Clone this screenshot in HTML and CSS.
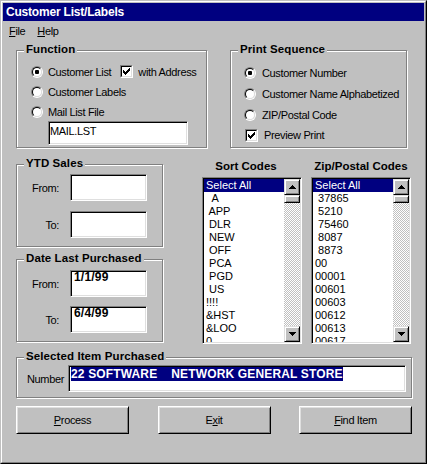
FILE: index.html
```html
<!DOCTYPE html>
<html lang="en">
<head>
<meta charset="utf-8">
<title>Customer List/Labels</title>
<link rel="stylesheet" href="styles.css">
</head>
<body>
<div class="window">
  <div class="frame">
    <div class="titlebar">Customer List/Labels</div>
    <div class="menubar">
      <span class="menu"><u>F</u>ile</span>
      <span class="menu"><u>H</u>elp</span>
    </div>
    <div class="content">
      <div class="row row-top">
        <div class="group g-function">
          <div class="gtitle">Function</div>
          <div class="gbody fn-body">
            <div class="opt h21">
              <span class="radio on"><span class="ring"></span></span>
              <span class="lbl">Customer List</span>
              <span class="check on ml4"><span class="box"><svg width="7" height="7" viewBox="0 0 7 7"><path d="M6 0h1v1h-1zM5 1h2v1h-2zM0 2h1v1h-1zM4 2h3v1h-3zM0 3h2v1h-2zM3 3h3v1h-3zM0 4h5v1h-5zM1 5h3v1h-3zM2 6h1v1h-1z" fill="#000"/></svg></span></span>
              <span class="lbl">with Address</span>
            </div>
            <div class="opt h20">
              <span class="radio"><span class="ring"></span></span>
              <span class="lbl">Customer Labels</span>
            </div>
            <div class="opt h19">
              <span class="radio"><span class="ring"></span></span>
              <span class="lbl">Mail List File</span>
            </div>
            <div class="field mail-field">MAIL.LST</div>
          </div>
        </div>
        <div class="group g-print">
          <div class="gtitle">Print Sequence</div>
          <div class="gbody print-body">
            <div class="opt h21">
              <span class="radio on"><span class="ring"></span></span>
              <span class="lbl">Customer Number</span>
            </div>
            <div class="opt h21">
              <span class="radio"><span class="ring"></span></span>
              <span class="lbl">Customer Name Alphabetized</span>
            </div>
            <div class="opt h21">
              <span class="radio"><span class="ring"></span></span>
              <span class="lbl">ZIP/Postal Code</span>
            </div>
            <div class="opt h20">
              <span class="check on ml1"><span class="box"><svg width="7" height="7" viewBox="0 0 7 7"><path d="M6 0h1v1h-1zM5 1h2v1h-2zM0 2h1v1h-1zM4 2h3v1h-3zM0 3h2v1h-2zM3 3h3v1h-3zM0 4h5v1h-5zM1 5h3v1h-3zM2 6h1v1h-1z" fill="#000"/></svg></span></span>
              <span class="lbl">Preview Print</span>
            </div>
          </div>
        </div>
      </div>

      <div class="row row-mid">
        <div class="leftcol">
          <div class="group g-range">
            <div class="gtitle">YTD Sales</div>
            <div class="gbody range-body">
              <span class="rlbl">From:</span>
              <div class="field range-field"></div>
              <span class="rlbl">To:</span>
              <div class="field range-field"></div>
            </div>
          </div>
          <div class="group g-range g-date">
            <div class="gtitle">Date Last Purchased</div>
            <div class="gbody range-body date-body">
              <span class="rlbl">From:</span>
              <div class="field range-field bold-val">1/1/99</div>
              <span class="rlbl">To:</span>
              <div class="field range-field bold-val">6/4/99</div>
            </div>
          </div>
        </div>

        <div class="lists">
          <div class="listcol">
            <div class="ltitle sort-title">Sort Codes</div>
            <div class="list">
              <div class="items">
                <div class="item sel">Select All</div>
                <div class="item">  A</div>
                <div class="item"> APP</div>
                <div class="item"> DLR</div>
                <div class="item"> NEW</div>
                <div class="item"> OFF</div>
                <div class="item"> PCA</div>
                <div class="item"> PGD</div>
                <div class="item"> US</div>
                <div class="item">!!!!</div>
                <div class="item">&amp;HST</div>
                <div class="item">&amp;LOO</div>
                <div class="item">0</div>
              </div>
              <div class="scrollbar">
                <div class="sb-btn"><svg width="7" height="4" viewBox="0 0 7 4"><path d="M3 0h1v1h1v1h1v1h1v1h-7v-1h1v-1h1v-1h1z" fill="#000"/></svg></div>
                <div class="sb-thumb"></div>
                <div class="sb-track"></div>
                <div class="sb-btn"><svg width="7" height="4" viewBox="0 0 7 4"><path d="M0 0h7v1h-1v1h-1v1h-1v1h-1v-1h-1v-1h-1v-1h-1z" fill="#000"/></svg></div>
              </div>
            </div>
          </div>
          <div class="listcol">
            <div class="ltitle">Zip/Postal Codes</div>
            <div class="list">
              <div class="items">
                <div class="item sel">Select All</div>
                <div class="item"> 37865</div>
                <div class="item"> 5210</div>
                <div class="item"> 75460</div>
                <div class="item"> 8087</div>
                <div class="item"> 8873</div>
                <div class="item">00</div>
                <div class="item">00001</div>
                <div class="item">00601</div>
                <div class="item">00603</div>
                <div class="item">00612</div>
                <div class="item">00613</div>
                <div class="item">00617</div>
              </div>
              <div class="scrollbar">
                <div class="sb-btn"><svg width="7" height="4" viewBox="0 0 7 4"><path d="M3 0h1v1h1v1h1v1h1v1h-7v-1h1v-1h1v-1h1z" fill="#000"/></svg></div>
                <div class="sb-thumb"></div>
                <div class="sb-track"></div>
                <div class="sb-btn"><svg width="7" height="4" viewBox="0 0 7 4"><path d="M0 0h7v1h-1v1h-1v1h-1v1h-1v-1h-1v-1h-1v-1h-1z" fill="#000"/></svg></div>
              </div>
            </div>
          </div>
        </div>
      </div>

      <div class="group g-selected">
        <div class="gtitle">Selected Item Purchased</div>
        <div class="gbody sel-body">
          <span class="sel-lbl">Number</span>
          <div class="field sel-field"><span class="hilite">22 SOFTWARE    NETWORK GENERAL STORE</span></div>
        </div>
      </div>

      <div class="buttons">
        <div class="btn"><span><u>P</u>rocess</span></div>
        <div class="btn"><span>E<u>x</u>it</span></div>
        <div class="btn"><span><u>F</u>ind Item</span></div>
      </div>
    </div>
  </div>
</div>
</body>
</html>
```

FILE: styles.css
```css
html, body {
  margin: 0;
  padding: 0;
  background: #c0c0c0;
}

body {
  font-family: "Liberation Sans", Arial, sans-serif;
  font-size: 11px;
  color: #000;
}

.window {
  width: 427px;
  height: 464px;
  box-sizing: border-box;
  border: 1px solid;
  border-color: #c0c0c0 #000 #000 #c0c0c0;
  background: #c0c0c0;
}

.frame {
  height: 100%;
  box-sizing: border-box;
  border: 1px solid;
  border-color: #fff #808080 #808080 #fff;
  padding: 1px;
  display: flex;
  flex-direction: column;
}

.titlebar {
  height: 18px;
  line-height: 18px;
  background: #000080;
  color: #fff;
  font-weight: bold;
  font-size: 12px;
  letter-spacing: -0.2px;
  padding-left: 3px;
  flex: none;
}

.menubar {
  height: 18px;
  box-sizing: border-box;
  padding-top: 2px;
  line-height: 16px;
  display: flex;
  flex: none;
  letter-spacing: -0.35px;
}

.menu {
  padding: 0 6px;
}

u {
  text-decoration: underline;
  text-underline-offset: 1px;
}

.content {
  padding-left: 13px;
  display: flex;
  flex-direction: column;
  align-items: flex-start;
}

.row {
  display: flex;
  align-items: flex-start;
}

.row-top {
  margin-top: 11px;
}

/* etched group box */
.group {
  box-sizing: border-box;
  border: 1px solid #808080;
  box-shadow: inset 1px 1px 0 #fff, 1px 1px 0 #fff;
}

.gtitle {
  width: fit-content;
  margin: -8px 0 0 7px;
  padding: 0 2px;
  background: #c0c0c0;
  font-weight: bold;
  font-size: 11.5px;
  line-height: 13px;
  letter-spacing: 0.1px;
}

.lbl, .rlbl, .sel-lbl, .btn, .field {
  letter-spacing: -0.35px;
}

.g-function {
  width: 191px;
  height: 98px;
}

.fn-body {
  padding: 5px 0 0 14px;
}

.g-print {
  width: 177px;
  height: 98px;
  margin-left: 23px;
}

.print-body {
  padding: 6px 0 0 13px;
}

.opt {
  display: flex;
  align-items: center;
  gap: 5px;
  white-space: nowrap;
}

.print-body .opt {
  gap: 6px;
}

.h21 { height: 21px; }
.h20 { height: 20px; }
.h19 { height: 19px; }

.ml4 { margin-left: 4px; }
.ml1 { margin-left: 1px; }

/* radio button */
.radio {
  width: 12px;
  height: 12px;
  box-sizing: border-box;
  border: 1px solid;
  border-color: #808080 #fff #fff #808080;
  border-radius: 50%;
  display: flex;
  flex: none;
}

.ring {
  flex: 1;
  border: 1px solid;
  border-color: #000 #dfdfdf #dfdfdf #000;
  border-radius: 50%;
  background: #fff;
  display: flex;
  align-items: center;
  justify-content: center;
}

.radio.on .ring::after {
  content: "";
  width: 4px;
  height: 4px;
  border-radius: 1px;
  background: #000;
}

/* checkbox */
.check {
  width: 13px;
  height: 13px;
  box-sizing: border-box;
  border: 1px solid;
  border-color: #808080 #fff #fff #808080;
  display: flex;
  flex: none;
}

.check .box {
  flex: 1;
  border: 1px solid;
  border-color: #000 #dfdfdf #dfdfdf #000;
  background: #fff;
  padding: 1px;
  display: flex;
}

.check svg {
  display: block;
  shape-rendering: crispEdges;
}

/* sunken text field */
.field {
  box-sizing: border-box;
  border: 1px solid;
  border-color: #808080 #fff #fff #808080;
  box-shadow: inset 1px 1px 0 #000, inset -1px -1px 0 #dfdfdf;
  background: #fff;
  padding: 1px;
  white-space: pre;
  overflow: hidden;
}

.mail-field {
  margin-left: 17px;
  width: 140px;
  height: 24px;
  line-height: 16px;
  padding-left: 1px;
}

/* middle row */
.row-mid {
  margin-top: 12px;
}

.leftcol {
  padding-top: 4px;
  display: flex;
  flex-direction: column;
}

.g-range {
  width: 147px;
  height: 83px;
}

.g-date {
  margin-top: 12px;
}

.range-body {
  display: grid;
  grid-template-columns: 42px 77px;
  column-gap: 11px;
  row-gap: 10px;
  align-items: center;
  padding-top: 4px;
}

.date-body {
  padding-top: 5px;
  row-gap: 9px;
}

.rlbl {
  justify-self: end;
}

.range-field {
  height: 27px;
}

.bold-val {
  font-weight: bold;
  font-size: 12px;
  letter-spacing: 0.2px;
  line-height: 8px;
  padding: 2px 0 0 3px;
}

.lists {
  margin-left: 39px;
  display: flex;
  gap: 9px;
}

.listcol {
  width: 100px;
  display: flex;
  flex-direction: column;
}

.ltitle {
  font-weight: bold;
  font-size: 11.5px;
  line-height: 13px;
  text-align: center;
  margin-bottom: 4px;
  white-space: nowrap;
}

.sort-title {
  padding-right: 12px;
}

.list {
  width: 100px;
  height: 167px;
  box-sizing: border-box;
  border: 1px solid;
  border-color: #808080 #fff #fff #808080;
  box-shadow: inset 1px 1px 0 #000, inset -1px -1px 0 #dfdfdf;
  padding: 1px;
  background: #fff;
  display: flex;
}

.items {
  flex: 1;
  overflow: hidden;
}

.item {
  height: 13px;
  line-height: 13px;
  padding-left: 2px;
  white-space: pre;
}

.item.sel {
  background: #000080;
  color: #fff;
}

.scrollbar {
  width: 16px;
  display: flex;
  flex-direction: column;
  flex: none;
}

.sb-btn, .sb-thumb {
  box-sizing: border-box;
  border: 1px solid;
  border-color: #dfdfdf #000 #000 #dfdfdf;
  box-shadow: inset 1px 1px 0 #fff, inset -1px -1px 0 #808080;
  background: #c0c0c0;
  flex: none;
}

.sb-btn {
  height: 16px;
  display: flex;
  align-items: center;
  justify-content: center;
}

.sb-btn svg {
  display: block;
  shape-rendering: crispEdges;
}

.sb-thumb {
  height: 8px;
}

.sb-track {
  flex: 1;
  background-color: #c0c0c0;
  background-image: conic-gradient(#fff 0 25%, #c0c0c0 0 50%, #fff 0 75%, #c0c0c0 0);
  background-size: 2px 2px;
}

/* selected item */
.g-selected {
  margin-top: 13px;
  width: 396px;
  height: 41px;
}

.sel-body {
  display: flex;
  align-items: center;
  padding: 2px 0 0 10px;
}

.sel-lbl {
  width: 41px;
  flex: none;
}

.sel-field {
  width: 338px;
  height: 27px;
  padding: 1px 0 0 2px;
}

.hilite {
  display: inline-block;
  background: #000080;
  color: #fff;
  font-weight: bold;
  font-size: 12px;
  letter-spacing: 0.15px;
  line-height: 14px;
  vertical-align: top;
}

/* buttons */
.buttons {
  margin-top: 8px;
  width: 396px;
  display: flex;
  justify-content: space-between;
}

.btn {
  width: 113px;
  height: 28px;
  box-sizing: border-box;
  border: 1px solid;
  border-color: #fff #000 #000 #fff;
  box-shadow: inset 1px 1px 0 #dfdfdf, inset -1px -1px 0 #808080;
  background: #c0c0c0;
  display: flex;
  align-items: center;
  justify-content: center;
}
```
